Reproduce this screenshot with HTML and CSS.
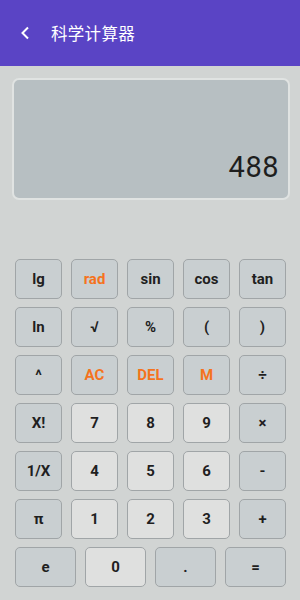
FILE: index.html
```html
<!DOCTYPE html>
<html lang="zh">
<head>
<meta charset="utf-8">
<link rel="stylesheet" href="styles.css">
</head>
<body>
<header class="bar">
  <svg class="back" width="10" height="14" viewBox="0 0 10 14"><path d="M8 1.5 L2.5 7 L8 12.5" fill="none" stroke="#fff" stroke-width="2"/></svg>
  <span class="title">科学计算器</span>
</header>
<div class="display"><span class="value">488</span></div>
<div class="keys">
  <div class="key fn">lg</div>
  <div class="key fn orange">rad</div>
  <div class="key fn">sin</div>
  <div class="key fn">cos</div>
  <div class="key fn">tan</div>

  <div class="key fn">ln</div>
  <div class="key fn">√</div>
  <div class="key fn">%</div>
  <div class="key fn">(</div>
  <div class="key fn">)</div>

  <div class="key fn">^</div>
  <div class="key fn orange">AC</div>
  <div class="key fn orange">DEL</div>
  <div class="key fn orange">M</div>
  <div class="key fn">÷</div>

  <div class="key fn">X!</div>
  <div class="key num">7</div>
  <div class="key num">8</div>
  <div class="key num">9</div>
  <div class="key fn">×</div>

  <div class="key fn">1/X</div>
  <div class="key num">4</div>
  <div class="key num">5</div>
  <div class="key num">6</div>
  <div class="key fn">-</div>

  <div class="key fn">π</div>
  <div class="key num">1</div>
  <div class="key num">2</div>
  <div class="key num">3</div>
  <div class="key fn">+</div>
</div>
<div class="keys last">
  <div class="key fn">e</div>
  <div class="key num">0</div>
  <div class="key fn">.</div>
  <div class="key fn">=</div>
</div>
</body>
</html>
```
FILE: styles.css
```css
html, body {
  margin: 0;
  padding: 0;
  background: #d1d4d3;
  font-family: Roboto, "Noto Sans CJK SC", sans-serif;
}
.bar {
  height: 66px;
  background: #5a44c5;
  display: flex;
  align-items: center;
  padding-left: 20px;
  box-sizing: border-box;
}
.back {
  display: block;
  margin-right: 21px;
}
.title {
  color: #fff;
  font-size: 16.5px;
  font-family: "Noto Sans CJK SC", sans-serif;
  letter-spacing: 0.3px;
}
.display {
  margin: 12px 10px 0 12px;
  height: 122px;
  box-sizing: border-box;
  border: 2px solid #e0e3e2;
  border-radius: 7px;
  background: #b7bfc2;
  display: flex;
  justify-content: flex-end;
  align-items: flex-end;
  padding: 0 9px 16px 0;
}
.value {
  font-size: 29px;
  line-height: 29px;
  color: #1e1e1e;
  letter-spacing: 0.5px;
}
.keys {
  display: grid;
  grid-template-columns: repeat(5, 47px);
  grid-auto-rows: 40px;
  column-gap: 9px;
  row-gap: 8px;
  padding-left: 15px;
  margin-top: 59px;
}
.keys.last {
  grid-template-columns: repeat(4, 61px);
  column-gap: 9px;
  margin-top: 8px;
}
.key {
  box-sizing: border-box;
  border: 1px solid #a0a5a7;
  border-radius: 5px;
  display: flex;
  align-items: center;
  justify-content: center;
  font-weight: bold;
  font-size: 15px;
  color: #1f1f1f;
}
.fn { background: #c9cfd1; }
.num { background: #dfe0df; }
.orange { color: #f5731d; }
```
